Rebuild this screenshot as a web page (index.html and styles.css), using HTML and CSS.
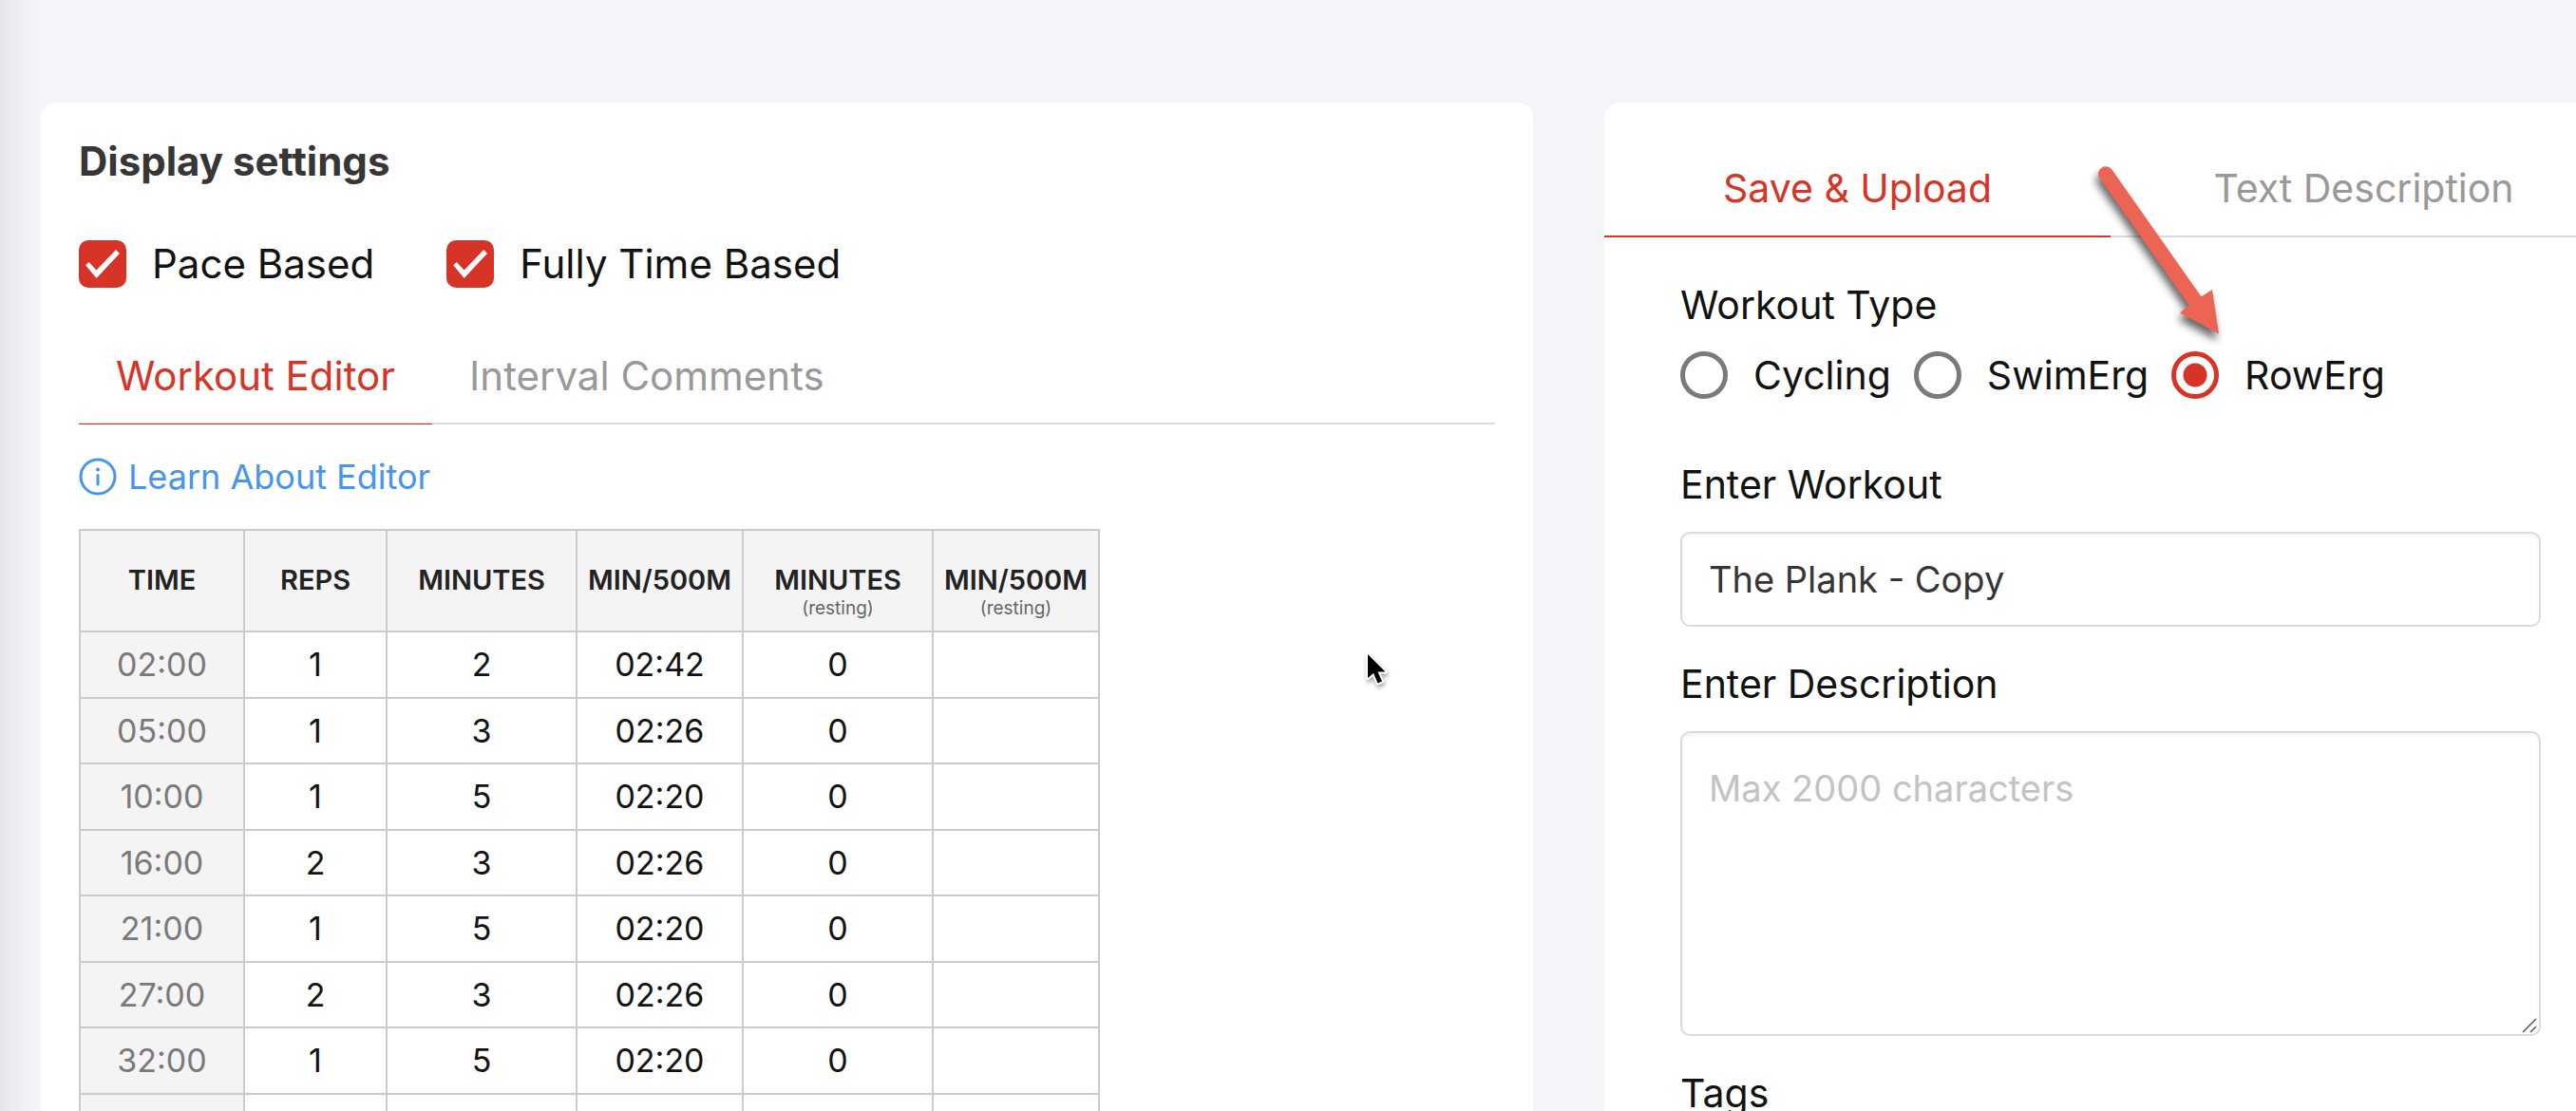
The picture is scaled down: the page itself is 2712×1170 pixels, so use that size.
FILE: index.html
```html
<!DOCTYPE html>
<html lang="en">
<head>
  <meta charset="UTF-8" />
  <meta name="viewport" content="width=device-width, initial-scale=1.0"/>
  <title>Workout Editor</title>
  <link rel="stylesheet" href="styles.css">
</head>
<body>
  <main class="layout">
    <!-- Editor -->
    <section class="panel editor">
      <h1>Display settings</h1>
      <div class="checks">
        <label class="option"><input type="checkbox" checked /><span>Pace Based</span></label>
        <label class="option"><input type="checkbox" checked /><span>Fully Time Based</span></label>
      </div>

      <nav class="tabs">
        <button type="button" class="tab active">Workout Editor</button>
        <button type="button" class="tab">Interval Comments</button>
      </nav>

      <a href="#" class="learn">
        <svg width="40" height="40" viewBox="0 0 40 40" fill="none" stroke="currentColor" stroke-width="3">
          <circle cx="20" cy="20" r="18"/>
          <path d="M20 18.5V28" stroke-linecap="round"/>
          <circle cx="20" cy="12.500" r="2" fill="currentColor" stroke="none"/>
        </svg>
        <span>Learn About Editor</span>
      </a>

      <table class="intervals">
        <colgroup>
          <col class="col-time"><col class="col-reps"><col class="col-min"><col class="col-pace"><col class="col-min"><col class="col-pace">
        </colgroup>
        <thead>
          <tr>
            <th>TIME</th>
            <th>REPS</th>
            <th>MINUTES</th>
            <th>MIN/500M</th>
            <th>MINUTES<small>(resting)</small></th>
            <th>MIN/500M<small>(resting)</small></th>
          </tr>
        </thead>
        <tbody>
          <tr><td>02:00</td><td>1</td><td>2</td><td>02:42</td><td>0</td><td></td></tr>
          <tr><td>05:00</td><td>1</td><td>3</td><td>02:26</td><td>0</td><td></td></tr>
          <tr><td>10:00</td><td>1</td><td>5</td><td>02:20</td><td>0</td><td></td></tr>
          <tr><td>16:00</td><td>2</td><td>3</td><td>02:26</td><td>0</td><td></td></tr>
          <tr><td>21:00</td><td>1</td><td>5</td><td>02:20</td><td>0</td><td></td></tr>
          <tr><td>27:00</td><td>2</td><td>3</td><td>02:26</td><td>0</td><td></td></tr>
          <tr><td>32:00</td><td>1</td><td>5</td><td>02:20</td><td>0</td><td></td></tr>
          <tr><td></td><td></td><td></td><td></td><td></td><td></td></tr>
        </tbody>
      </table>

      <svg class="cursor" width="40" height="50" viewBox="0 0 40 50">
        <path d="M10 9V34L16 29L20.500 39.500L25 37.500L20.500 27.500H28.500Z" fill="#000" stroke="#fff" stroke-width="4" stroke-linejoin="round" paint-order="stroke"/>
      </svg>
    </section>

    <!-- Save form -->
    <section class="panel save">
      <nav class="tabs">
        <button type="button" class="tab active">Save &amp; Upload</button>
        <button type="button" class="tab">Text Description</button>
      </nav>

      <form class="save-form">
        <fieldset>
          <legend>Workout Type</legend>
          <div class="radios">
            <label class="option"><input type="radio" name="type" /><span>Cycling</span></label>
            <label class="option"><input type="radio" name="type" /><span>SwimErg</span></label>
            <label class="option"><input type="radio" name="type" checked /><span>RowErg</span></label>
          </div>
        </fieldset>

        <label for="workout">Enter Workout</label>
        <input type="text" id="workout" value="The Plank - Copy" />

        <label for="description">Enter Description</label>
        <div class="area">
          <textarea id="description" placeholder="Max 2000 characters"></textarea>
          <svg class="grip" width="18" height="18" viewBox="0 0 18 18" stroke="#555" stroke-width="1.500">
            <path d="M2 16L16 2M10 16L16 10"/>
          </svg>
        </div>

        <div class="tags">Tags</div>
      </form>

      <svg class="arrow" width="170" height="220" viewBox="0 0 170 220">
        <path d="M19.500 26A8 8 0 0 1 33 18L127.500 152.500L139 145L146 191.500L105 169.500L114.500 161.500Z" fill="#ec6453"/>
      </svg>
    </section>
  </main>
</body>
</html>
```
FILE: styles.css
```css
* {
  box-sizing: border-box;
}
body {
  margin: 0;
  height: 100vh;
  overflow: hidden;
  font-family: Inter, sans-serif;
  font-size: 41px;
  line-height: 60px;
  color: #121212;
  background: linear-gradient(to right, #e5e6ea, #eeeff4 20px, #f4f5f9 42px);
}
/* the save panel runs past the right edge of the window */
.layout {
  display: grid;
  grid-template-columns: 1571fr 1066fr;
  gap: 75px;
  min-height: 100vh;
  margin-right: -43px;
  padding: 108px 0 0 43px;
}
.panel {
  position: relative;
  min-width: 0;
  background-color: #fff;
  border-radius: 16px;
}
.editor {
  padding: 32px 40px;
  font-size: 42px;
}
h1 {
  margin: 0;
  font-size: 42px;
  line-height: 60px;
  font-weight: 700;
  color: #363636;
}
.checks {
  display: flex;
  gap: 76px;
  margin-top: 48px;
}
.option {
  display: flex;
  align-items: center;
  gap: 27px;
}
input[type="checkbox"],
input[type="radio"] {
  appearance: none;
  flex: none;
  width: 50px;
  height: 50px;
  margin: 0;
}
input[type="checkbox"] {
  display: grid;
  place-items: center;
  background-color: #d63427;
  border-radius: 10px;
}
input[type="checkbox"]::before {
  content: "";
  width: 38px;
  height: 30px;
  background-color: #fff;
  clip-path: polygon(3% 54%, 12% 43%, 33% 72%, 87% 0, 97% 13%, 33% 100%);
}
input[type="radio"] {
  border: 5px solid #7a7a7a;
  border-radius: 50%;
}
input[type="radio"]:checked {
  border-color: #d63427;
  background: radial-gradient(circle, #d63427 12px, #fff 13px);
}
.tabs {
  display: flex;
  border-bottom: 2px solid #dbdbdb;
}
.tab {
  padding: 19px 39px 20px;
  margin-bottom: -2px;
  font: inherit;
  color: #999;
  background: none;
  border: none;
  border-bottom: 1px solid transparent;
  cursor: pointer;
}
.tab.active {
  color: #d63427;
  border-bottom-color: #d63427;
}
.editor .tabs {
  margin-top: 39px;
}
.learn {
  display: flex;
  align-items: center;
  gap: 12px;
  margin: 35px 0;
  font-size: 36px;
  line-height: 40px;
  color: #4795ec;
  text-decoration: none;
}
.intervals {
  width: 1075px;
  table-layout: fixed;
  border-collapse: collapse;
  text-align: center;
}
.col-time { width: 173px; }
.col-reps { width: 150px; }
.col-min { width: 200px; }
.col-pace { width: 175px; }
th, td {
  padding: 0;
  border: 2px solid #cbcbcb;
}
th {
  height: 107px;
  padding-top: 34px;
  vertical-align: top;
  font-size: 29px;
  line-height: 36px;
  font-weight: 600;
  color: #222;
  background-color: #f4f4f4;
}
th small {
  display: block;
  font-size: 19px;
  line-height: 24px;
  font-weight: 400;
  color: #666;
}
td {
  height: 70px;
  font-size: 34px;
  line-height: 40px;
}
tr:nth-child(even) td {
  height: 69px;
}
td:first-child {
  color: #7a7a7a;
  background-color: #f4f4f4;
}
.cursor {
  position: absolute;
  top: 572px;
  left: 1387px;
  filter: drop-shadow(1px 3px 2px rgba(0,0,0,0.35));
}
.save {
  padding-top: 40px;
}
.save .tab {
  flex: 1;
  padding: 20px 0 20px;
  border-bottom-width: 2px;
}
.save-form {
  display: flex;
  flex-direction: column;
  padding: 41px 80px 0;
}
fieldset {
  margin: 0 0 55px;
  padding: 0;
  border: none;
}
legend {
  padding: 0;
  margin-bottom: 14px;
}
.radios {
  display: flex;
  gap: 24px;
}
input[type="text"],
textarea {
  display: block;
  width: 100%;
  height: 100px;
  margin: 20px 0 30px;
  padding: 0 28px;
  font: inherit;
  font-size: 38px;
  color: #363636;
  background-color: #fff;
  border: 2px solid #dbdbdb;
  border-radius: 10px;
  box-shadow: inset 0 2px 4px rgba(10,10,10,0.05);
}
textarea {
  height: 321px;
  padding-top: 28px;
  resize: none;
}
textarea::placeholder {
  color: #c3c3c3;
}
.area {
  position: relative;
}
.grip {
  position: absolute;
  right: 3px;
  bottom: 32px;
}
.arrow {
  position: absolute;
  top: 52px;
  left: 501px;
  filter: drop-shadow(-2px 7px 4px rgba(0,0,0,0.6));
}
```
